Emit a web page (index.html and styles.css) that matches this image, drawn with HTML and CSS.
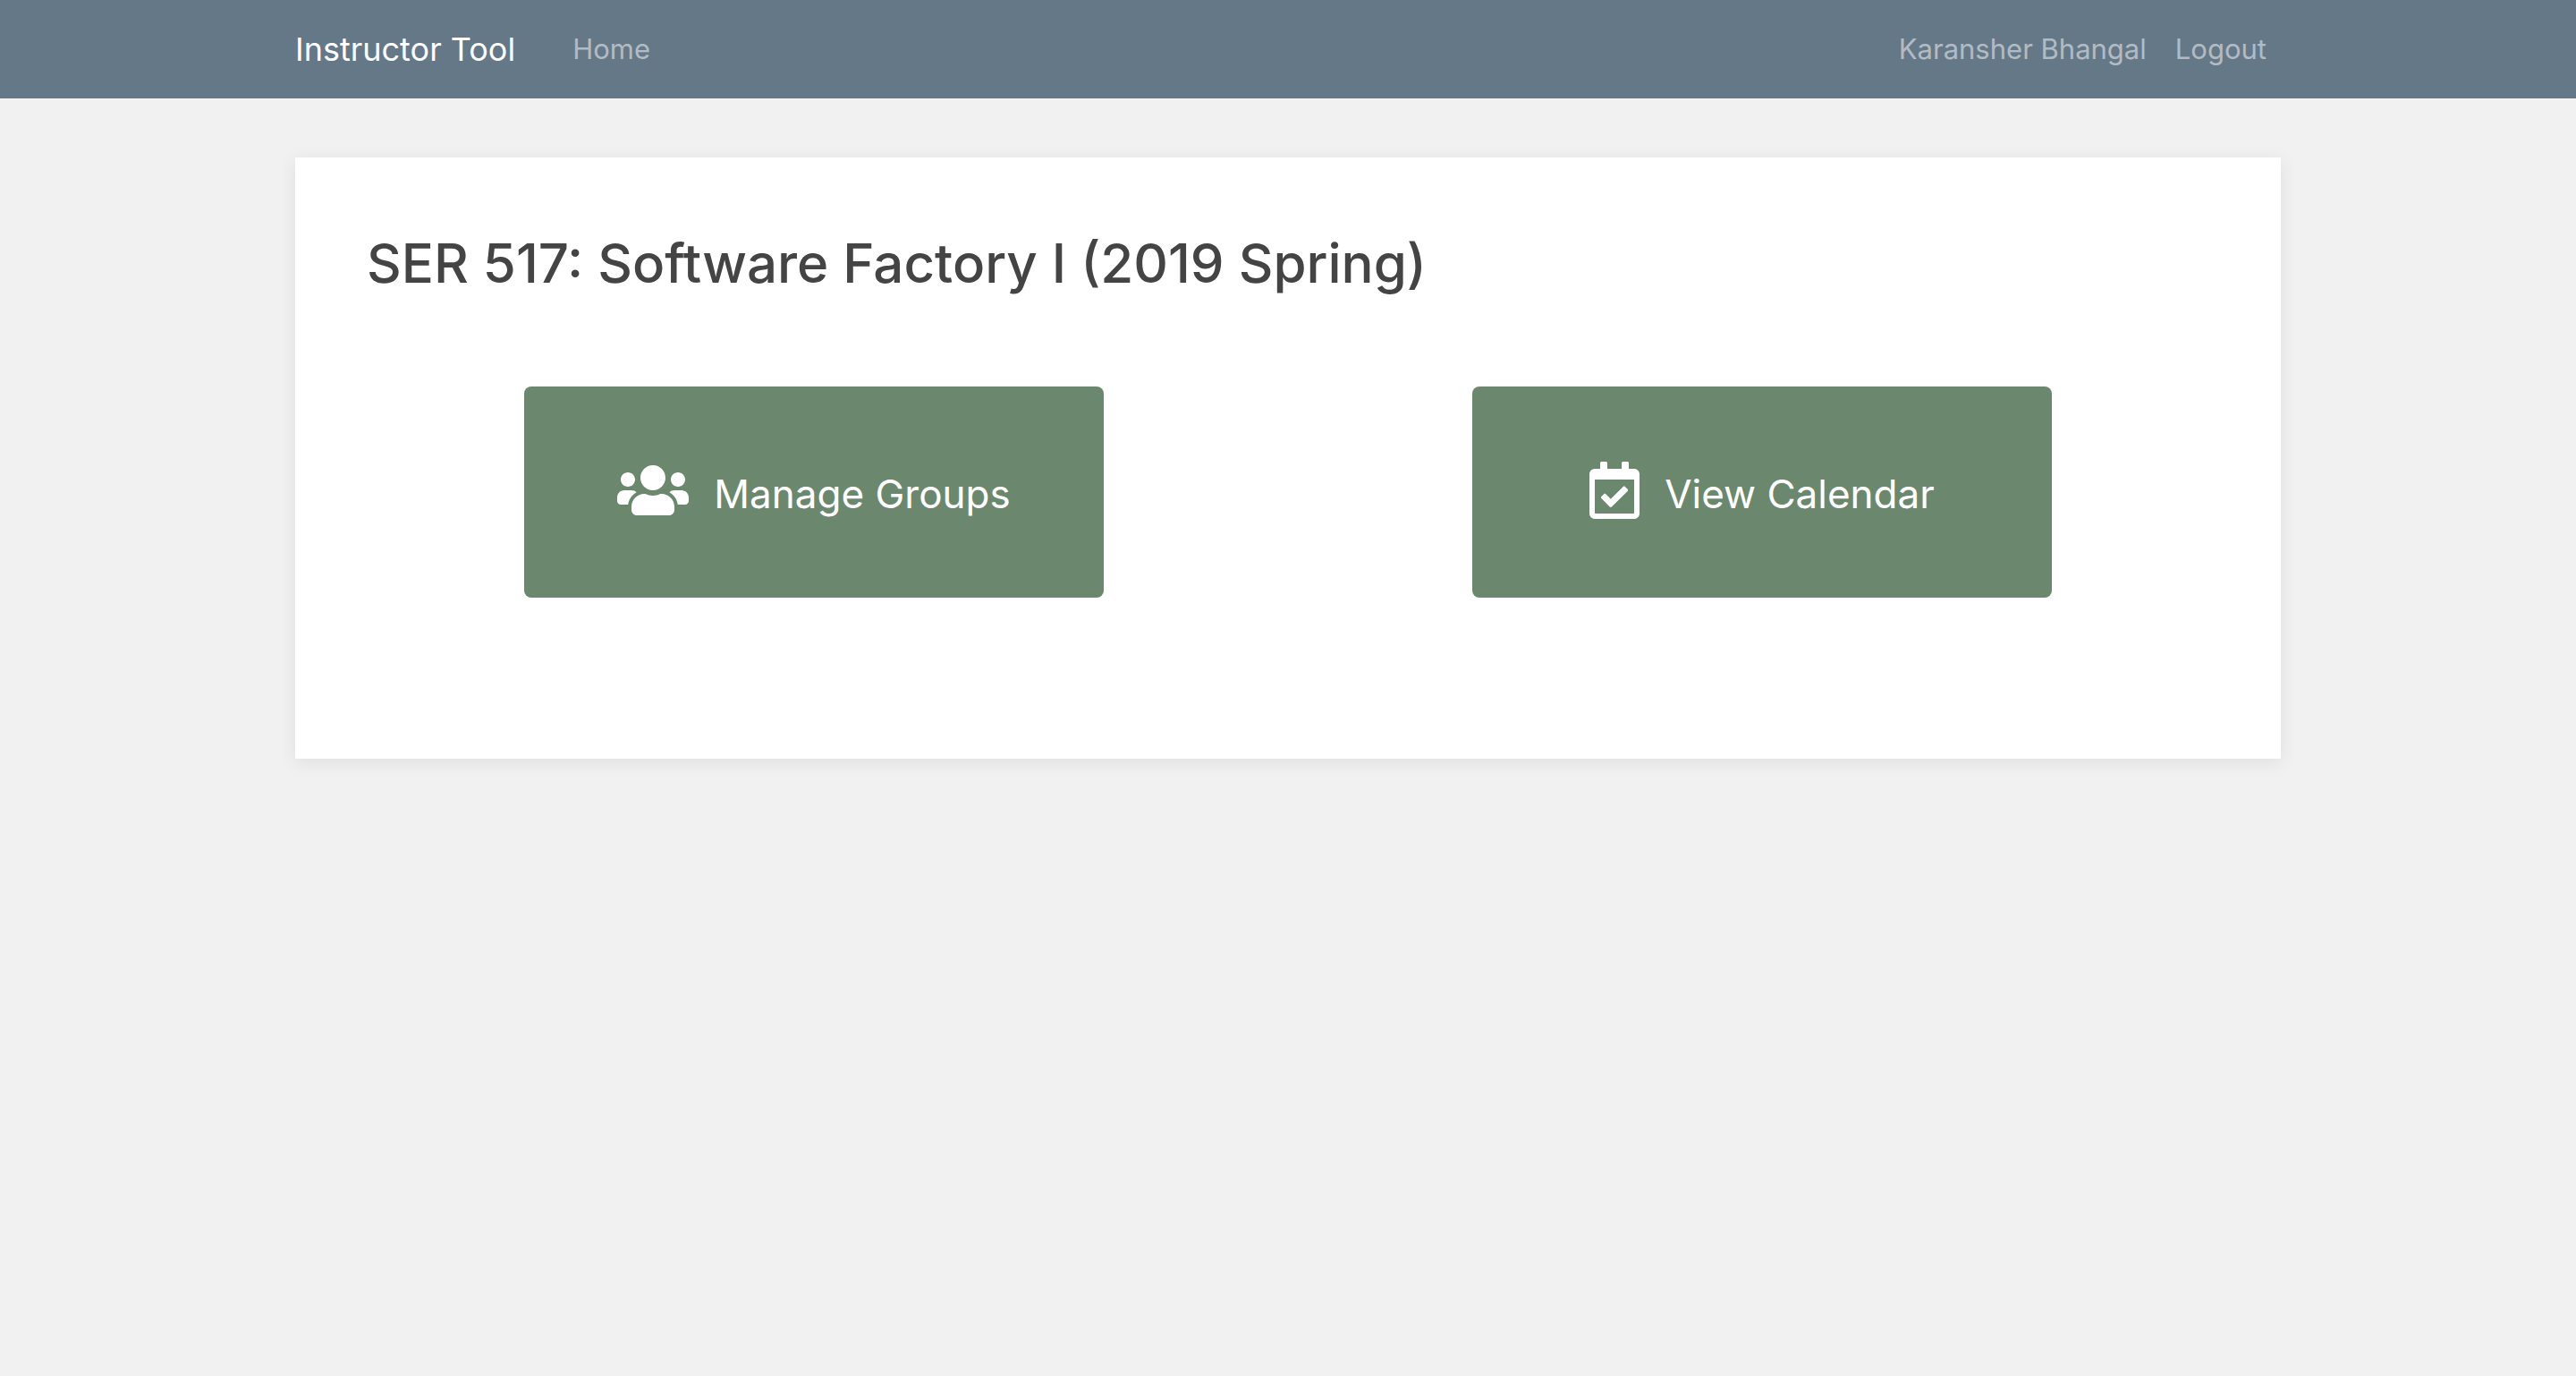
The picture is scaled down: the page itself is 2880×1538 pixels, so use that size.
FILE: index.html
```html
<!DOCTYPE html>
<html lang="en">
<head>
<meta charset="utf-8">
<meta name="viewport" content="width=device-width, initial-scale=1">
<title>Instructor Tool</title>
<link rel="stylesheet" href="styles.css">
</head>
<body>
<header class="navbar">
  <nav class="container navbar-inner" aria-label="Main">
    <a class="brand" href="#">Instructor Tool</a>
    <a class="nav-link" href="#">Home</a>
    <div class="nav-right">
      <a class="nav-link" href="#">Karansher Bhangal</a>
      <a class="nav-link" href="#">Logout</a>
    </div>
  </nav>
</header>
<main class="container">
  <section class="card">
    <h1 class="title">SER 517: Software Factory I (2019 Spring)</h1>
    <div class="actions">
      <button type="button" class="action">
        <svg class="icon icon-users" viewBox="0 0 640 512" aria-hidden="true"><path fill="currentColor" d="M96 224c35.300 0 64-28.700 64-64s-28.700-64-64-64-64 28.700-64 64 28.700 64 64 64zm448 0c35.300 0 64-28.700 64-64s-28.700-64-64-64-64 28.700-64 64 28.700 64 64 64zm32 32h-64c-17.600 0-33.500 7.100-45.100 18.600 40.300 22.100 68.900 62 75.100 109.400h66c17.700 0 32-14.300 32-32v-32c0-35.300-28.700-64-64-64zm-256 0c61.900 0 112-50.100 112-112S381.900 32 320 32 208 82.100 208 144s50.100 112 112 112zm76.800 32h-8.300c-20.800 10-43.900 16-68.500 16s-47.600-6-68.500-16h-8.300C179.600 288 128 339.600 128 403.200V432c0 26.500 21.500 48 48 48h288c26.500 0 48-21.500 48-48v-28.800c0-63.600-51.600-115.200-115.200-115.200zm-223.700-13.400C161.500 263.100 145.600 256 128 256H64c-35.300 0-64 28.700-64 64v32c0 17.700 14.300 32 32 32h65.900c6.300-47.400 34.900-87.300 75.200-109.400z"/></svg>
        <span class="action-label">Manage Groups</span>
      </button>
      <button type="button" class="action">
        <svg class="icon icon-calendar" viewBox="0 0 448 512" aria-hidden="true"><path fill="currentColor" d="M400 64h-48V12c0-6.627-5.373-12-12-12h-40c-6.627 0-12 5.373-12 12v52H160V12c0-6.627-5.373-12-12-12h-40c-6.627 0-12 5.373-12 12v52H48C21.490 64 0 85.490 0 112v352c0 26.510 21.490 48 48 48h352c26.510 0 48-21.490 48-48V112c0-26.510-21.490-48-48-48zm-6 400H54a6 6 0 0 1-6-6V160h352v298a6 6 0 0 1-6 6zm-52.849-200.650L198.842 404.519c-4.705 4.667-12.303 4.637-16.971-.068l-75.091-75.699c-4.667-4.705-4.637-12.303.068-16.971l22.719-22.536c4.705-4.667 12.303-4.637 16.970.069l44.104 44.461 111.072-110.181c4.705-4.667 12.303-4.637 16.971.068l22.536 22.718c4.667 4.705 4.636 12.303-.069 16.970z"/></svg>
        <span class="action-label">View Calendar</span>
      </button>
    </div>
  </section>
</main>
</body>
</html>
```
FILE: styles.css
```css
* { box-sizing: border-box; }

body {
  min-height: 100vh;
  margin: 0;
  background: #f1f1f1;
  color: #444;
  font-family: Inter, "Liberation Sans", sans-serif;
}

.container {
  width: 100%;
  max-width: 2280px;
  margin: 0 auto;
  padding: 0 30px;
}

.navbar { background: #657888; }

.navbar-inner {
  display: flex;
  align-items: center;
  min-height: 110px;
}

.brand {
  margin-right: 48px;
  color: #fff;
  font-size: 36px;
  line-height: 48px;
  text-decoration: none;
}

.nav-link {
  padding: 16px;
  color: rgba(255, 255, 255, 0.5);
  font-size: 31px;
  line-height: 48px;
  text-decoration: none;
}

.nav-right {
  display: flex;
  margin-left: auto;
}

.card {
  margin: 66px 0;
  padding: 78px 50px 180px;
  background: #fff;
  box-shadow: 0 4px 20px rgba(0, 0, 0, 0.08);
}

.title {
  margin: 0 30px 98px;
  font-size: 60px;
  font-weight: 500;
  line-height: 80px;
}

.actions {
  display: grid;
  grid-template-columns: 1fr 1fr;
  justify-items: center;
}

.action {
  display: flex;
  align-items: center;
  justify-content: center;
  gap: 28px;
  width: 648px;
  max-width: 100%;
  min-height: 236px;
  padding: 0;
  border: 0;
  border-radius: 8px;
  background: #6b886f;
  color: #fff;
  font-family: inherit;
  font-size: 44px;
  line-height: 64px;
  cursor: pointer;
}

.action-label { padding-top: 4px; }

.icon {
  height: 64px;
  margin-bottom: 4px;
}

.icon-users { width: 80px; }
.icon-calendar { width: 56px; }
```
